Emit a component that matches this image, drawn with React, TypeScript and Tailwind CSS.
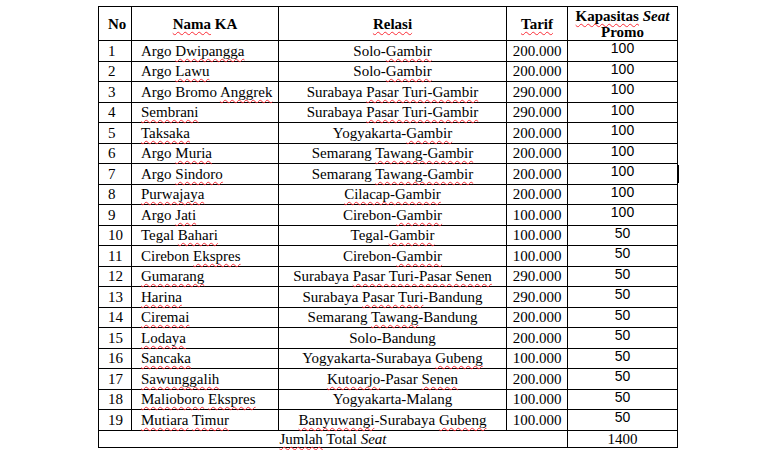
import React from "react";

type Part = string | { w: string } | { i: string };
type Row = { no: number; nama: Part[]; relasi: Part[]; tarif: string; kap: string };

// red wavy spellcheck marks
const W = ({ children }: { children: React.ReactNode }) => (
  <span className="underline decoration-wavy decoration-red-500 decoration-1 underline-offset-[2px] [text-decoration-skip-ink:none]">
    {children}
  </span>
);

function render(parts: Part[]) {
  return parts.map((p, i) => {
    if (typeof p === "string") return <React.Fragment key={i}>{p}</React.Fragment>;
    if ("w" in p) return <W key={i}>{p.w}</W>;
    return <em key={i}>{p.i}</em>;
  });
}

const ROWS: Row[] = [
  { no: 1, nama: ["Argo ", { w: "Dwipangga" }], relasi: ["Solo-", { w: "Gambir" }], tarif: "200.000", kap: "100" },
  { no: 2, nama: ["Argo ", { w: "Lawu" }], relasi: ["Solo-", { w: "Gambir" }], tarif: "200.000", kap: "100" },
  { no: 3, nama: ["Argo Bromo ", { w: "Anggrek" }], relasi: ["Surabaya ", { w: "Pasar Turi-Gambir" }], tarif: "290.000", kap: "100" },
  { no: 4, nama: [{ w: "Sembrani" }], relasi: ["Surabaya ", { w: "Pasar Turi-Gambir" }], tarif: "290.000", kap: "100" },
  { no: 5, nama: [{ w: "Taksaka" }], relasi: ["Yogyakarta-", { w: "Gambir" }], tarif: "200.000", kap: "100" },
  { no: 6, nama: ["Argo ", { w: "Muria" }], relasi: ["Semarang ", { w: "Tawang-Gambir" }], tarif: "200.000", kap: "100" },
  { no: 7, nama: ["Argo ", { w: "Sindoro" }], relasi: ["Semarang ", { w: "Tawang-Gambir" }], tarif: "200.000", kap: "100" },
  { no: 8, nama: [{ w: "Purwajaya" }], relasi: [{ w: "Cilacap-Gambir" }], tarif: "200.000", kap: "100" },
  { no: 9, nama: ["Argo ", { w: "Jati" }], relasi: ["Cirebon-", { w: "Gambir" }], tarif: "100.000", kap: "100" },
  { no: 10, nama: ["Tegal ", { w: "Bahari" }], relasi: ["Tegal-", { w: "Gambir" }], tarif: "100.000", kap: "50" },
  { no: 11, nama: ["Cirebon ", { w: "Ekspres" }], relasi: ["Cirebon-", { w: "Gambir" }], tarif: "100.000", kap: "50" },
  { no: 12, nama: [{ w: "Gumarang" }], relasi: ["Surabaya ", { w: "Pasar Turi-Pasar Senen" }], tarif: "290.000", kap: "50" },
  { no: 13, nama: [{ w: "Harina" }], relasi: ["Surabaya ", { w: "Pasar Turi" }, "-Bandung"], tarif: "290.000", kap: "50" },
  { no: 14, nama: [{ w: "Ciremai" }], relasi: ["Semarang ", { w: "Tawang" }, "-Bandung"], tarif: "200.000", kap: "50" },
  { no: 15, nama: [{ w: "Lodaya" }], relasi: ["Solo-Bandung"], tarif: "200.000", kap: "50" },
  { no: 16, nama: [{ w: "Sancaka" }], relasi: ["Yogyakarta-Surabaya ", { w: "Gubeng" }], tarif: "100.000", kap: "50" },
  { no: 17, nama: [{ w: "Sawunggalih" }], relasi: [{ w: "Kutoarjo" }, "-Pasar ", { w: "Senen" }], tarif: "200.000", kap: "50" },
  { no: 18, nama: [{ w: "Malioboro" }, " ", { w: "Ekspres" }], relasi: ["Yogyakarta-Malang"], tarif: "100.000", kap: "50" },
  { no: 19, nama: [{ w: "Mutiara" }, " ", { w: "Timur" }], relasi: [{ w: "Banyuwangi" }, "-Surabaya ", { w: "Gubeng" }], tarif: "100.000", kap: "50" },
];

const cell = "border border-black p-0 align-middle";

export default function App() {
  return (
    <div className="relative w-[772px] h-[450px] bg-white text-black font-['Liberation_Serif','Times_New_Roman',serif] text-[15px] leading-[18px]">
      <div className="pt-[6px] pl-[98px]">
        <table className="border-collapse table-fixed w-[579px]">
          <colgroup>
            <col className="w-[33px]" />
            <col className="w-[147px]" />
            <col className="w-[228px]" />
            <col className="w-[61px]" />
            <col className="w-[110px]" />
          </colgroup>
          <thead>
            <tr className="h-[34px] font-bold">
              <th className={`${cell} text-left pl-[9px]`}>No</th>
              <th className={`${cell} text-center`}>
                <W>Nama</W> KA
              </th>
              <th className={`${cell} text-center`}>
                <W>Relasi</W>
              </th>
              <th className={`${cell} text-center`}>
                <W>Tarif</W>
              </th>
              <th className={`${cell} text-center leading-[16px]`}>
                <W>Kapasitas</W> <em>Seat</em>
                <br />
                Promo
              </th>
            </tr>
          </thead>
          <tbody>
            {ROWS.map((r) => (
              <tr key={r.no} className="h-[20.5px]">
                <td className={`${cell} pl-[9px]`}>{r.no}</td>
                <td className={`${cell} pl-[9px] whitespace-nowrap`}>{render(r.nama)}</td>
                <td className={`${cell} text-center whitespace-nowrap`}>{render(r.relasi)}</td>
                <td className={`${cell} text-center`}>{r.tarif}</td>
                <td className={`${cell} text-center align-top font-['Liberation_Sans',Arial,sans-serif] text-[14px] leading-[15px]`}>
                  {r.kap}
                </td>
              </tr>
            ))}
            <tr className="h-[17px]">
              <td colSpan={4} className={`${cell} text-center leading-[16px]`}>
                <W>Jumlah</W> Total <em>Seat</em>
              </td>
              <td className={`${cell} text-center leading-[16px]`}>1400</td>
            </tr>
          </tbody>
        </table>
      </div>
      {/* text cursor mark */}
      <div className="absolute left-[677px] top-[165px] w-[2px] h-[18px] bg-black" />
    </div>
  );
}
